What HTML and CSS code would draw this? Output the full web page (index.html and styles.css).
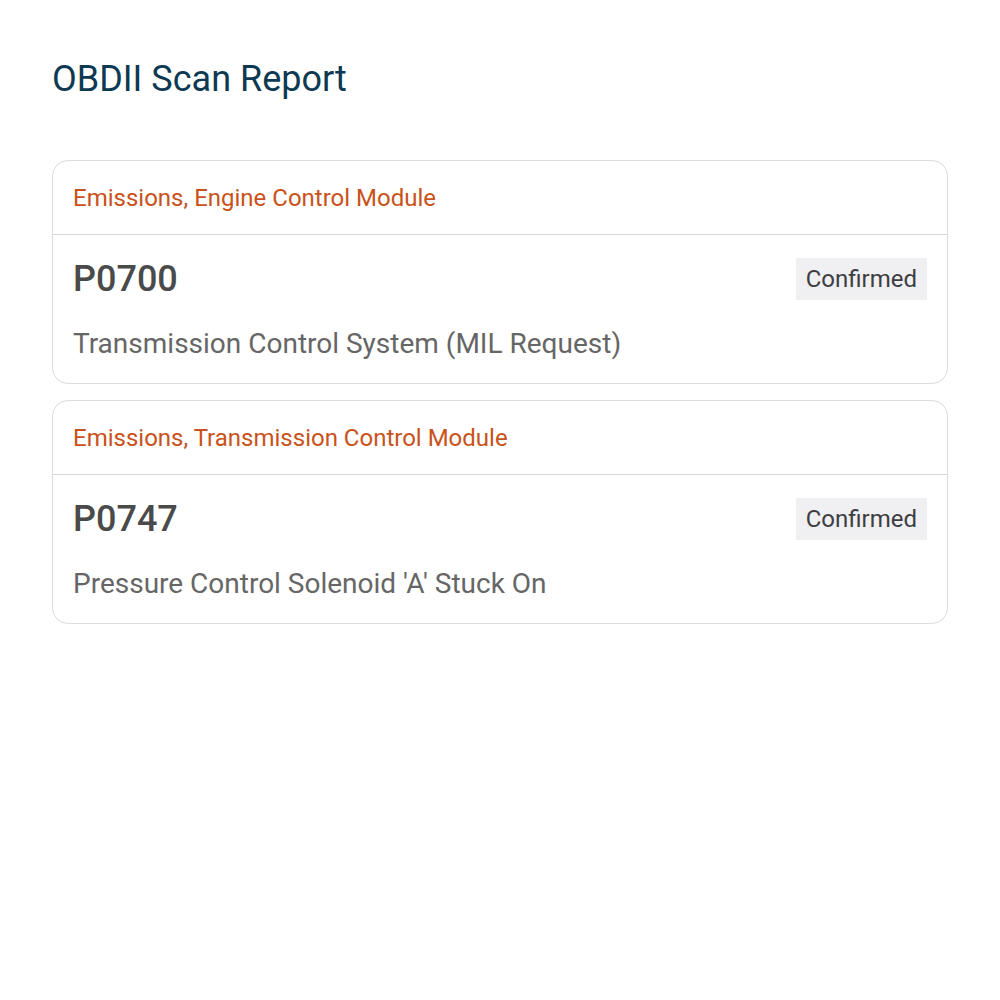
FILE: index.html
```html
<!DOCTYPE html>
<html lang="en">
<head>
<meta charset="utf-8">
<title>OBDII Scan Report</title>
<link rel="stylesheet" href="styles.css">
</head>
<body>
<main class="report">
  <h1 class="report-title">OBDII Scan Report</h1>
  <section class="dtc-list">
    <article class="dtc-card">
      <header class="dtc-module">Emissions, Engine Control Module</header>
      <div class="dtc-body">
        <div class="dtc-row">
          <span class="dtc-code">P0700</span>
          <span class="dtc-status">Confirmed</span>
        </div>
        <p class="dtc-desc">Transmission Control System (MIL Request)</p>
      </div>
    </article>
    <article class="dtc-card">
      <header class="dtc-module">Emissions, Transmission Control Module</header>
      <div class="dtc-body">
        <div class="dtc-row">
          <span class="dtc-code">P0747</span>
          <span class="dtc-status">Confirmed</span>
        </div>
        <p class="dtc-desc">Pressure Control Solenoid 'A' Stuck On</p>
      </div>
    </article>
  </section>
</main>
</body>
</html>
```

FILE: styles.css
```css
html, body {
  margin: 0;
  padding: 0;
  background: #ffffff;
}

body {
  font-family: Roboto, "Noto Sans", "Liberation Sans", sans-serif;
}

.report {
  padding: 57px 52px 0 52px;
}

.report-title {
  margin: 0 0 59px 0;
  font-size: 36px;
  font-weight: 400;
  line-height: 44px;
  color: #0d3a52;
}

.dtc-list {
  display: flex;
  flex-direction: column;
  gap: 16px;
}

.dtc-card {
  border: 1px solid #dcdcdc;
  border-radius: 16px;
  overflow: hidden;
}

.dtc-module {
  padding: 0 20px;
  height: 73px;
  display: flex;
  align-items: center;
  font-size: 24px;
  color: #c9521b;
  border-bottom: 1px solid #d6d6d6;
}

.dtc-body {
  padding: 23px 20px 22px 20px;
}

.dtc-row {
  display: flex;
  justify-content: space-between;
  align-items: center;
}

.dtc-code {
  font-size: 36px;
  font-weight: 500;
  color: #4a4a4a;
}

.dtc-status {
  background: #f0f0f2;
  color: #3d3d42;
  font-size: 24px;
  padding: 0 10px;
  height: 42px;
  line-height: 42px;
}

.dtc-desc {
  margin: 27px 0 0 0;
  font-size: 28px;
  line-height: 34px;
  color: #666666;
}
```
